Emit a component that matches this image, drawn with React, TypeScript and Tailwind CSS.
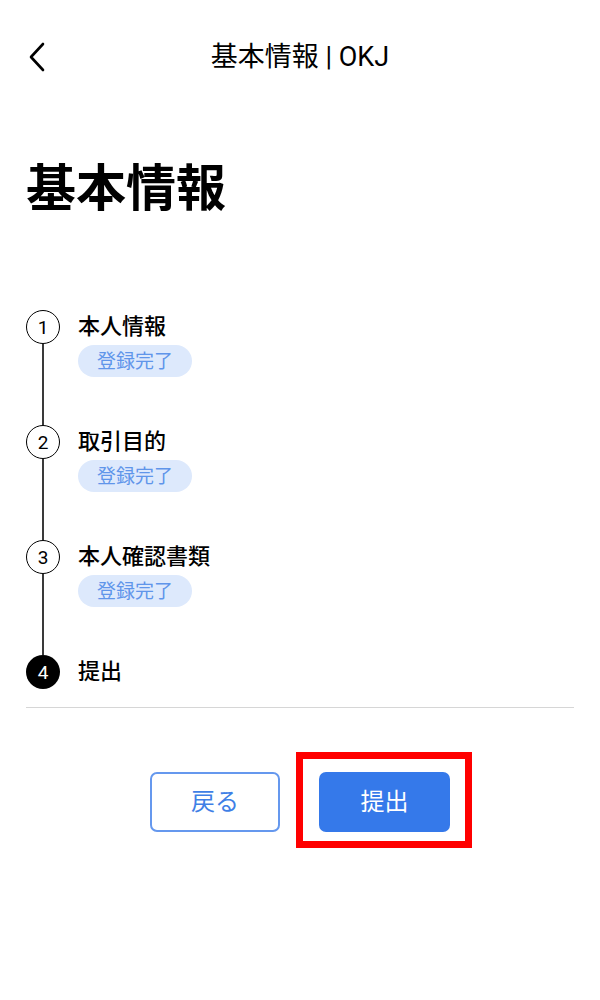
import React from "react";

const steps = [
  { n: 1, label: "本人情報", done: true },
  { n: 2, label: "取引目的", done: true },
  { n: 3, label: "本人確認書類", done: true },
  { n: 4, label: "提出", done: false },
];

const font = { fontFamily: "Roboto, 'Noto Sans CJK JP', sans-serif" };

export default function App() {
  return (
    <div className="min-h-[1000px] w-full bg-white text-black" style={font}>
      {/* Header */}
      <div className="relative flex h-[114px] items-center justify-center">
        <button className="absolute left-[22px] top-[38px] flex h-[38px] w-[30px] items-center justify-center">
          <svg width="20" height="30" viewBox="0 0 20 30" fill="none">
            <path d="M16 2 L4 15 L16 28" stroke="black" strokeWidth="2.6" strokeLinecap="round" strokeLinejoin="round" />
          </svg>
        </button>
        <h1 className="text-[27px] font-normal leading-none">基本情報 | OKJ</h1>
      </div>

      {/* Title */}
      <div className="px-[26px] pt-[44px]">
        <h2 className="text-[50px] font-bold leading-[62px]">基本情報</h2>
      </div>

      {/* Stepper */}
      <div className="mt-[90px] px-[26px]">
        {steps.map((s, i) => {
          const last = i === steps.length - 1;
          return (
            <div key={s.n} className={`flex ${last ? "" : "h-[115px]"}`}>
              <div className="flex w-[34px] flex-col items-center">
                {s.done ? (
                  <div className="flex h-[34px] w-[34px] items-center justify-center rounded-full border-[1.8px] border-black text-[19px] font-normal leading-none">
                    {s.n}
                  </div>
                ) : (
                  <div className="flex h-[34px] w-[34px] items-center justify-center rounded-full bg-black text-[19px] font-normal leading-none text-white">
                    {s.n}
                  </div>
                )}
                {!last && <div className="w-[2px] flex-1 bg-[#3a3a3a]" />}
              </div>
              <div className="ml-[18px] flex flex-col items-start">
                <div className="flex h-[34px] items-center text-[22px] font-medium leading-none">{s.label}</div>
                {s.done && (
                  <span className="mt-[1px] flex h-[32px] w-[114px] items-center justify-center rounded-full bg-[#dde9fc] text-[19px] font-normal leading-none text-[#5f95ea]">
                    登録完了
                  </span>
                )}
              </div>
            </div>
          );
        })}
        <div className="mt-[18px] h-px w-full bg-[#d6d6d6]" />
      </div>

      {/* Buttons */}
      <div className="mt-[64px] flex justify-center gap-[39px]">
        <button className="flex h-[60px] w-[130px] items-center justify-center rounded-[7px] border-2 border-[#6598ee] bg-white text-[24px] leading-none text-[#3f7fe6]">
          戻る
        </button>
        <div className="relative">
          <button className="flex h-[60px] w-[131px] items-center justify-center rounded-[7px] bg-[#3579ea] text-[24px] leading-none text-white">
            提出
          </button>
          <div className="pointer-events-none absolute -bottom-[16px] -left-[23px] -right-[22px] -top-[20px] border-[7px] border-[#ff0000]" />
        </div>
      </div>
    </div>
  );
}
